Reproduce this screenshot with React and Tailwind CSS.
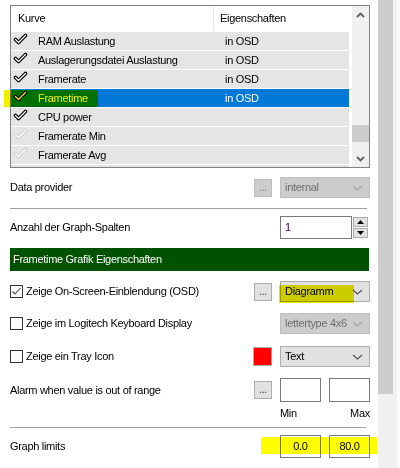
import React from 'react';

const rows = [
  { name: 'RAM Auslastung', prop: 'in OSD', on: true },
  { name: 'Auslagerungsdatei Auslastung', prop: 'in OSD', on: true },
  { name: 'Framerate', prop: 'in OSD', on: true },
  { name: 'Frametime', prop: 'in OSD', on: true, selected: true },
  { name: 'CPU power', prop: '', on: true },
  { name: 'Framerate Min', prop: '', on: false },
  { name: 'Framerate Avg', prop: '', on: false },
  { name: '', prop: '', on: false },
];

function Check({ on }) {
  return (
    <svg width="15" height="12" viewBox="0 0 15 12">
      <path
        d="M2.5 6.5 L5.5 9.5 L12.5 2.5"
        fill="none"
        stroke={on ? '#000' : '#d2d2d2'}
        strokeWidth="3.6"
        strokeLinecap="round"
        strokeLinejoin="round"
      />
      <path
        d="M2.5 6.5 L5.5 9.5 L12.5 2.5"
        fill="none"
        stroke="#fff"
        strokeWidth="1.3"
        strokeLinecap="round"
        strokeLinejoin="round"
      />
    </svg>
  );
}

function Chevron({ up, color = '#606060' }) {
  return (
    <svg width="9" height="6" viewBox="0 0 9 6">
      <path
        d={up ? 'M1 5 L4.5 1.5 L8 5' : 'M1 1 L4.5 4.5 L8 1'}
        fill="none"
        stroke={color}
        strokeWidth="1.8"
      />
    </svg>
  );
}

function ComboArrow({ color }) {
  return (
    <svg width="11" height="6" viewBox="0 0 11 6">
      <path d="M1 1 L5.5 5 L10 1" fill="none" stroke={color} strokeWidth="1.1" />
    </svg>
  );
}

function DotsButton({ disabled }) {
  return (
    <div
      className={[
        'mr-[8px] flex h-[18px] w-[18px] items-end justify-center border pb-[3px] text-[10px] leading-none',
        disabled ? 'border-[#bfbfbf] bg-[#cccccc] text-[#838383]' : 'border-[#adadad] bg-[#e1e1e1] text-[#333]',
      ].join(' ')}
    >
      ...
    </div>
  );
}

function Combo({ value, disabled }) {
  return (
    <div
      className={[
        'flex h-[21px] w-[90px] items-center justify-between border pl-[4px] pr-[6px]',
        disabled ? 'border-[#bfbfbf] bg-[#cccccc] text-[#6d6d6d]' : 'border-[#adadad] bg-[#e1e1e1] text-black',
      ].join(' ')}
    >
      <span>{value}</span>
      <ComboArrow color={disabled ? '#a8a8a8' : '#505050'} />
    </div>
  );
}

function CheckBox({ checked }) {
  return (
    <div className="flex h-[13px] w-[13px] items-center justify-center border border-[#333] bg-white">
      {checked && (
        <svg width="11" height="11" viewBox="0 0 11 11">
          <path d="M1.5 5.5 L4 8 L9.5 2" fill="none" stroke="#444" strokeWidth="1.1" />
        </svg>
      )}
    </div>
  );
}

export default function App() {
  return (
    <div className="relative flex h-[468px] w-[400px] overflow-hidden bg-white font-['Liberation_Sans',Arial,sans-serif] text-[11px] tracking-[-0.3px] text-black">
      <div className="flex w-[378px] flex-col pl-[10px] pt-[5px]">
        {/* list view */}
        <div className="flex h-[163px] w-[360px] shrink-0 border border-[#828282] bg-white">
          <div className="flex w-[338px] flex-col overflow-hidden">
            <div className="flex h-[25px] shrink-0 items-center">
              <div className="flex h-full w-[203px] items-center border-r border-[#e5e5e5] pl-[7px]">Kurve</div>
              <div className="pl-[6px]">Eigenschaften</div>
            </div>
            {rows.map((row, i) => (
              <div
                key={i}
                className={[
                  'flex h-[19px] shrink-0 items-center border-t border-white',
                  row.selected ? 'bg-[#0078d7] text-white' : 'bg-[#e5e5e5]',
                ].join(' ')}
              >
                <div className="flex w-[27px] self-start pl-[2px] pt-[1px]">
                  <Check on={row.on} />
                </div>
                <div className="w-[187px]">{row.name}</div>
                <div>{row.prop}</div>
              </div>
            ))}
          </div>
          <div className="w-[3px]" />
          <div className="flex w-[17px] flex-col bg-[#f0f0f0]">
            <div className="flex h-[17px] shrink-0 items-center justify-center">
              <Chevron up />
            </div>
            <div className="flex-1">
              <div className="mt-[102px] h-[17px] w-full bg-[#cdcdcd]" />
            </div>
            <div className="flex h-[17px] shrink-0 items-center justify-center">
              <Chevron />
            </div>
          </div>
        </div>

        {/* data provider */}
        <div className="mt-[9px] flex h-[21px] w-[360px] shrink-0 items-center">
          <div className="flex-1">Data provider</div>
          <DotsButton disabled />
          <Combo value="internal" disabled />
        </div>

        <div className="mt-[10px] h-px w-[357px] shrink-0 bg-[#a0a0a0]" />

        {/* numeric */}
        <div className="mt-[7px] flex h-[23px] w-[360px] shrink-0 items-center">
          <div className="flex-1">Anzahl der Graph-Spalten</div>
          <div className="mr-[2px] flex h-[23px] w-[88px]">
            <div className="flex flex-1 items-center border border-[#7a7a7a] pl-[4px] text-[#400040]">1</div>
            <div className="flex w-[16px] flex-col justify-center gap-[1px] pl-[1px]">
              <div className="flex h-[10px] items-center justify-center border border-[#adadad] bg-[#e1e1e1]">
                <svg width="7" height="4" viewBox="0 0 7 4">
                  <path d="M0 4 L3.5 0 L7 4 Z" fill="#000" />
                </svg>
              </div>
              <div className="flex h-[10px] items-center justify-center border border-[#adadad] bg-[#e1e1e1]">
                <svg width="7" height="4" viewBox="0 0 7 4">
                  <path d="M0 0 L3.5 4 L7 0 Z" fill="#000" />
                </svg>
              </div>
            </div>
          </div>
        </div>

        {/* green header */}
        <div className="mt-[9px] flex h-[23px] w-[359px] shrink-0 items-center bg-[#005200] pl-[3px] text-white">
          Frametime Grafik Eigenschaften
        </div>

        <div className="mt-[10px] flex h-[21px] w-[360px] shrink-0 items-center">
          <CheckBox checked />
          <div className="ml-[3px] flex-1">Zeige On-Screen-Einblendung (OSD)</div>
          <DotsButton />
          <Combo value="Diagramm" />
        </div>

        <div className="mt-[11px] flex h-[21px] w-[360px] shrink-0 items-center">
          <CheckBox />
          <div className="ml-[3px] flex-1">Zeige im Logitech Keyboard Display</div>
          <Combo value="lettertype 4x6" disabled />
        </div>

        <div className="mt-[12px] flex h-[21px] w-[360px] shrink-0 items-center">
          <CheckBox />
          <div className="ml-[3px] flex-1">Zeige ein Tray Icon</div>
          <div className="mr-[8px] h-[19px] w-[19px] border border-[#b0b0b0] bg-[#ff0000]" />
          <Combo value="Text" />
        </div>

        <div className="mt-[11px] flex h-[24px] w-[360px] shrink-0 items-center">
          <div className="flex-1">Alarm when value is out of range</div>
          <DotsButton />
          <div className="h-[24px] w-[41px] border border-[#7a7a7a] bg-white" />
          <div className="ml-[8px] h-[24px] w-[41px] border border-[#7a7a7a] bg-white" />
        </div>
        <div className="mt-[2px] flex h-[18px] w-[360px] shrink-0 items-center">
          <div className="flex-1" />
          <div className="flex w-[90px] justify-between">
            <span>Min</span>
            <span>Max</span>
          </div>
        </div>

        <div className="mt-[5px] h-px w-[356px] shrink-0 bg-[#a0a0a0]" />

        <div className="mt-[7px] flex h-[23px] w-[360px] shrink-0 items-center">
          <div className="flex-1">Graph limits</div>
          <div className="flex h-[23px] w-[41px] items-center justify-center border border-[#7a7a7a] bg-white">0.0</div>
          <div className="ml-[8px] flex h-[23px] w-[41px] items-center justify-center border border-[#7a7a7a] bg-white">80.0</div>
        </div>
      </div>

      {/* outer scrollbar */}
      <div className="w-[19px] bg-[#f0f0f0]">
        <div className="h-[394px] w-[15px] bg-[#cdcdcd]" />
      </div>
      <div className="w-[3px] bg-[#fafafa]" />

      {/* highlighter marks */}
      <div className="pointer-events-none absolute left-[4px] top-[90px] h-[17px] w-[94px] bg-[#f0f000] mix-blend-multiply" />
      <div className="pointer-events-none absolute left-[279px] top-[285px] h-[18px] w-[75px] bg-[#e8e800] mix-blend-multiply" />
      <div className="pointer-events-none absolute left-[261px] top-[437px] h-[17px] w-[116px] bg-[#ffff00] mix-blend-multiply" />
    </div>
  );
}
